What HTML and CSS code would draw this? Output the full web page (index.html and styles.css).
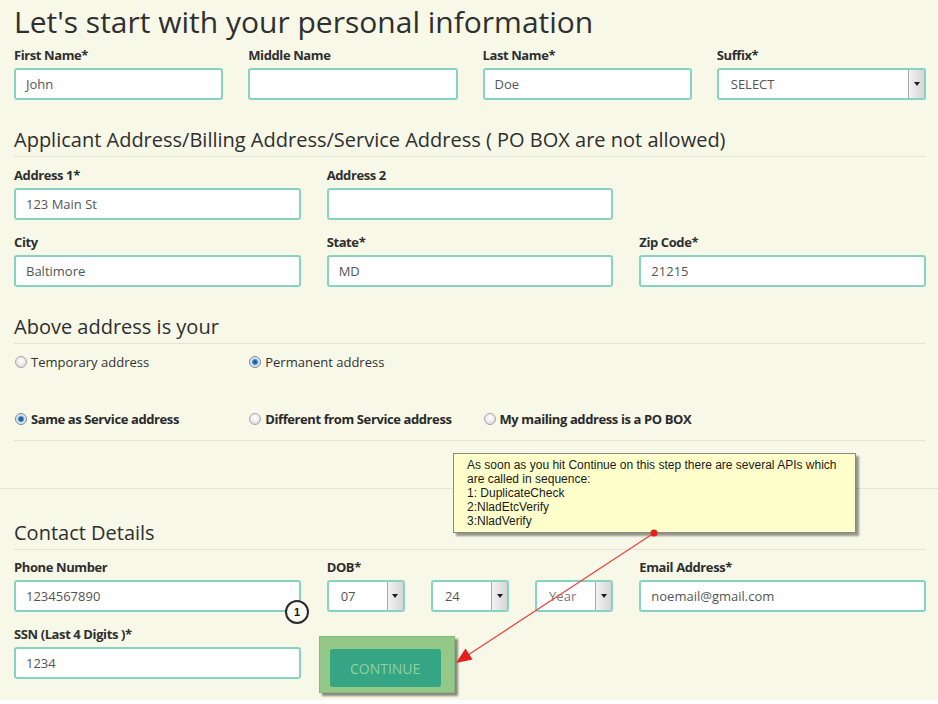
FILE: index.html
```html
<!DOCTYPE html>
<html lang="en">
<head>
<meta charset="utf-8">
<title>Personal information</title>
<link rel="stylesheet" href="styles.css">
</head>
<body>
<div class="page">
  <div class="container">
    <h1 class="title">Let's start with your personal information</h1>

    <div class="grid4 row-first">
      <div class="field">
        <label class="label">First Name*</label>
        <div class="input">John</div>
      </div>
      <div class="field">
        <label class="label">Middle Name</label>
        <div class="input"></div>
      </div>
      <div class="field">
        <label class="label">Last Name*</label>
        <div class="input">Doe</div>
      </div>
      <div class="field">
        <label class="label">Suffix*</label>
        <div class="input select"><span class="select-value pad-l">SELECT</span><span class="select-btn"><span class="caret"></span></span></div>
      </div>
    </div>

    <h2 class="section-title first-section">Applicant Address/Billing Address/Service Address ( PO BOX are not allowed)</h2>

    <div class="grid3 row-addr1">
      <div class="field">
        <label class="label">Address 1*</label>
        <div class="input">123 Main St</div>
      </div>
      <div class="field">
        <label class="label">Address 2</label>
        <div class="input"></div>
      </div>
    </div>

    <div class="grid3 row-addr2">
      <div class="field">
        <label class="label">City</label>
        <div class="input">Baltimore</div>
      </div>
      <div class="field">
        <label class="label">State*</label>
        <div class="input">MD</div>
      </div>
      <div class="field">
        <label class="label">Zip Code*</label>
        <div class="input">21215</div>
      </div>
    </div>

    <h2 class="section-title above-section">Above address is your</h2>

    <div class="radio-group">
      <div class="grid4 radio-row row-r1">
        <label class="radio"><span class="dot"></span>Temporary address</label>
        <label class="radio"><span class="dot checked"></span>Permanent address</label>
      </div>
      <div class="grid4 radio-row row-r2 strong">
        <label class="radio"><span class="dot checked"></span>Same as Service address</label>
        <label class="radio"><span class="dot"></span>Different from Service address</label>
        <label class="radio"><span class="dot"></span>My mailing address is a PO BOX</label>
      </div>
    </div>
  </div>

  <div class="divider-full"></div>

  <div class="container">
    <h2 class="section-title contact-section">Contact Details</h2>

    <div class="grid3 row-contact">
      <div class="field">
        <label class="label">Phone Number</label>
        <div class="input">1234567890</div>
      </div>
      <div class="field">
        <label class="label">DOB*</label>
        <div class="dob">
          <div class="input select"><span class="select-value pad-l2">07</span><span class="select-btn"><span class="caret"></span></span></div>
          <div class="input select"><span class="select-value pad-l2">24</span><span class="select-btn"><span class="caret"></span></span></div>
          <div class="input select"><span class="select-value pad-l2 muted">Year</span><span class="select-btn"><span class="caret"></span></span></div>
        </div>
      </div>
      <div class="field">
        <label class="label">Email Address*</label>
        <div class="input">noemail@gmail.com</div>
      </div>
    </div>

    <div class="grid3 row-ssn">
      <div class="field">
        <label class="label">SSN (Last 4 Digits )*</label>
        <div class="input">1234</div>
      </div>
      <div class="highlight">
        <button class="btn-continue" type="button">CONTINUE</button>
      </div>
    </div>
  </div>

  <div class="callout">As soon as you hit Continue on this step there are several APIs which<br>are called in sequence:<br>1: DuplicateCheck<br>2:NladEtcVerify<br>3:NladVerify</div>

  <svg class="arrow" width="938" height="704" viewBox="0 0 938 704" aria-hidden="true">
    <line x1="654" y1="533" x2="468" y2="655" stroke="#e8453f" stroke-width="1.2"/>
    <polygon points="456,663 472.5,659.5 465.5,648.5" fill="#e3201b"/>
    <circle cx="654" cy="533" r="3.5" fill="#e3201b"/>
  </svg>

  <div class="step-badge">1</div>
</div>
</body>
</html>
```

FILE: styles.css
```css
* { box-sizing: border-box; }

html, body {
  margin: 0;
  padding: 0;
  background: #ffffff;
}

body {
  font-family: "Open Sans", "Noto Sans", "Liberation Sans", sans-serif;
  color: #333333;
}

.page {
  position: relative;
  width: 938px;
  height: 700px;
  background: #f7f8e7;
  overflow: hidden;
}

.container {
  padding: 0 12px 0 14px;
}

.title {
  margin: 0;
  padding-top: 2px;
  font-size: 30px;
  line-height: 40px;
  font-weight: 400;
  color: #2f2f2f;
  white-space: nowrap;
}

.grid4 {
  display: grid;
  grid-template-columns: repeat(4, 1fr);
  column-gap: 25px;
}

.grid3 {
  display: grid;
  grid-template-columns: repeat(3, 1fr);
  column-gap: 26px;
}

.row-first { margin-top: 4px; }
.row-addr1 { margin-top: 9px; }
.row-addr2 { margin-top: 13px; }
.row-contact { margin-top: 8px; }
.row-ssn { margin-top: 13px; align-items: start; }

.field {
  display: flex;
  flex-direction: column;
}

.label {
  display: block;
  font-size: 13px;
  line-height: 18px;
  font-weight: 700;
  color: #2f2f2f;
  margin-bottom: 4px;
  white-space: nowrap;
  letter-spacing: -0.4px;
}

.input {
  height: 32px;
  border: 2px solid #86d3c3;
  border-radius: 3px;
  background: #ffffff;
  font-size: 13px;
  line-height: 28px;
  color: #555555;
  padding: 0 10px;
  white-space: nowrap;
}

.select {
  display: flex;
  padding: 0;
  overflow: hidden;
}

.select-value {
  flex: 1;
}

.pad-l { padding-left: 12px; }
.pad-l2 { padding-left: 12px; }
.muted { color: #7a7a7a; }

.select-btn {
  width: 16px;
  height: 100%;
  border-left: 1px solid #a9a9a9;
  background: linear-gradient(to right, #f2f2f2, #d6d6d6);
  display: flex;
  align-items: center;
  justify-content: center;
}

.caret {
  width: 0;
  height: 0;
  border-left: 3px solid transparent;
  border-right: 3px solid transparent;
  border-top: 4px solid #1e1e1e;
}

.dob {
  display: grid;
  grid-template-columns: repeat(3, 1fr);
  column-gap: 26px;
}

.section-title {
  margin: 0;
  font-size: 20px;
  line-height: 28px;
  font-weight: 400;
  color: #2f2f2f;
  padding-bottom: 2px;
  border-bottom: 1px solid #e3e4d3;
  white-space: nowrap;
}

.first-section { margin-top: 26px; }
.above-section { margin-top: 26px; }
.contact-section { margin-top: 30px; }

.radio-group {
  padding-bottom: 12px;
  border-bottom: 1px solid #e3e4d3;
}

.radio-row {
  font-size: 13px;
  line-height: 18px;
  color: #333333;
}

.row-r1 { margin-top: 9px; }
.row-r2 { margin-top: 39px; }

.strong { font-weight: 700; color: #2a2a2a; letter-spacing: -0.4px; }

.radio {
  display: flex;
  align-items: center;
  white-space: nowrap;
}

.dot {
  display: inline-block;
  width: 12px;
  height: 12px;
  border-radius: 50%;
  border: 1px solid #a7a7a7;
  background: radial-gradient(circle at 50% 40%, #ffffff 0, #f0f0f0 40%, #cfcfcf 100%);
  margin: 0 4px 0 1px;
  flex: none;
}

.dot.checked {
  border-color: #7c8795;
  background: radial-gradient(circle at 50% 50%, #0f4f8c 0, #2b72b5 2px, #8ab6df 3px, #e9eef3 4px, #cdd3d8 100%);
}

.divider-full {
  margin-top: 47px;
  height: 1px;
  background: #e3e4d3;
}

.highlight {
  margin-top: 11px;
  margin-left: -8px;
  width: 136px;
  height: 57px;
  background: #93c889;
  border: 1px solid #86b97c;
  box-shadow: 3px 3px 2px rgba(0, 0, 0, 0.45);
  padding: 12px 0 0 10px;
}

.btn-continue {
  display: block;
  width: 111px;
  height: 38px;
  border: none;
  border-radius: 3px;
  background: #35a583;
  color: #8fd3a0;
  font-family: "Open Sans", "Noto Sans", sans-serif;
  font-size: 14px;
  padding: 0;
}

.callout {
  position: absolute;
  left: 453px;
  top: 453px;
  width: 403px;
  height: 80px;
  background: #ffffcc;
  border: 1px solid #8a8a80;
  box-shadow: 3px 3px 2px rgba(0, 0, 0, 0.4);
  padding: 4px 10px 0 13px;
  font-family: "Liberation Sans", Arial, sans-serif;
  font-size: 12px;
  line-height: 14px;
  color: #1a1a1a;
}

.arrow {
  position: absolute;
  left: 0;
  top: 0;
  pointer-events: none;
}

.step-badge {
  position: absolute;
  left: 285px;
  top: 600px;
  width: 24px;
  height: 24px;
  border-radius: 50%;
  border: 2px solid #2a2a2a;
  background: #fbfbf4;
  font-family: "Liberation Sans", Arial, sans-serif;
  font-weight: 700;
  font-size: 11px;
  line-height: 20px;
  text-align: center;
  color: #111111;
}
```
